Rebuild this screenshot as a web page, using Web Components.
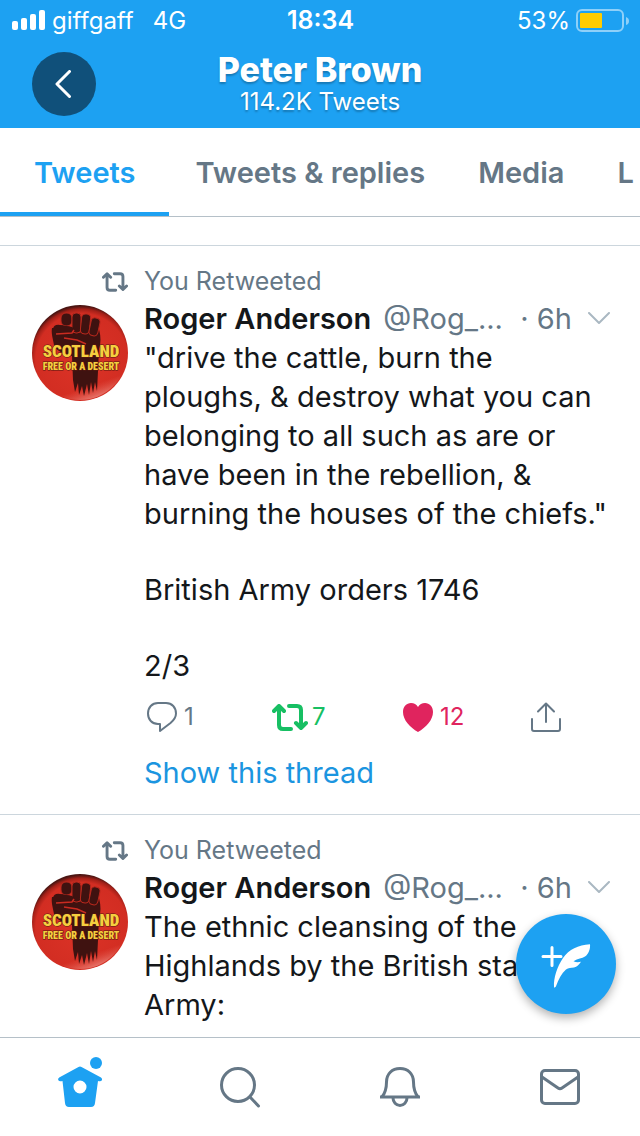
<!DOCTYPE html>
<html lang="en">
<head>
<meta charset="utf-8">
<meta name="viewport" content="width=device-width, initial-scale=1">
<title>Peter Brown</title>
<style>
  body {
    margin: 0;
    font-family: Inter, "Liberation Sans", sans-serif;
    color: #14171a;
    background: #fff;
    --blue: #1da1f2;
    --grey: #657786;
    --line: #ccd6dd;
  }
</style>
</head>
<body>
<profile-page>
  <status-bar slot="top" carrier="giffgaff" network="4G" time="18:34" battery="53"></status-bar>
  <profile-header slot="top" name="Peter Brown" count="114.2K Tweets"></profile-header>
  <profile-tabs slot="top">
    <a href="#tweets" aria-current="page">Tweets</a>
    <a href="#replies">Tweets &amp; replies</a>
    <a href="#media">Media</a>
    <a href="#likes" aria-label="Likes">L</a>
  </profile-tabs>

  <tweet-card author="Roger Anderson" handle="@Rog_..." age="6h" replies="1" retweets="7" likes="12">
    <p>"drive the cattle, burn the ploughs, &amp; destroy what you can belonging to all such as are or have been in the rebellion, &amp; burning the houses of the chiefs."</p>
    <p>British Army orders 1746</p>
    <p>2/3</p>
  </tweet-card>
  <tweet-card author="Roger Anderson" handle="@Rog_..." age="6h" replies="1" retweets="7" likes="12">
    <p>The ethnic cleansing of the Highlands by the British state Army:</p>
  </tweet-card>

  <compose-button slot="float"></compose-button>
  <bottom-nav slot="bottom"></bottom-nav>
</profile-page>

<script>
const icons = {
  back: '<svg width="18" height="28" viewBox="0 0 18 28" fill="none" stroke="currentColor" stroke-width="3" stroke-linecap="round" stroke-linejoin="round"><path d="M14.500 1.500L2 14l12.500 12.500"/></svg>',
  retweet: '<svg viewBox="0 0 36 27" fill="none" stroke="currentColor" stroke-width="4" stroke-linecap="round" stroke-linejoin="round"><path d="M2 7l5-5 5 5M7 3v18q0 4 4 4h8M17 2h8q4 0 4 4v18M24 19l5 5 5-5"/></svg>',
  reply: '<svg viewBox="0 0 30 30" fill="none" stroke="currentColor" stroke-width="2" stroke-linejoin="round"><path d="M11 1h8c6 0 10 4.500 10 10.500 0 4-2 6.500-5.500 9.500L13 29v-7h-2C5 22 1 17.500 1 11.500S5 1 11 1z"/></svg>',
  heart: '<svg viewBox="0 0 30 30" fill="currentColor"><path d="M15 30C7 25.500 0 18 0 10 0 4.500 3.500 1 8 1c3 0 5.500 1.500 7 4 1.500-2.500 4-4 7-4 4.500 0 8 3.500 8 9 0 8-7 15.500-15 20z"/></svg>',
  share: '<svg viewBox="0 0 30 30" fill="none" stroke="currentColor" stroke-width="2" stroke-linecap="round" stroke-linejoin="round"><path d="M15 20V1.500M7 9.500l8-8 8 8M1 17v10q0 2 2 2h24q2 0 2-2V17"/></svg>',
  caret: '<svg width="22" height="13" viewBox="0 0 22 13" fill="none" stroke="currentColor" stroke-width="2" stroke-linecap="round" stroke-linejoin="round"><path d="M1 1l10 10L21 1"/></svg>',
  feather: '<svg viewBox="0 0 100 100" fill="#fff"><path d="M27 42.500h18M36 33.500v18" stroke="#fff" stroke-width="3" stroke-linecap="round"/><path d="M38 73C37.500 64 41 53 47 44 53 35.500 62 31 74 30.300c.5 4-1 9.500-5 12.300-3 2-7 2-11.500 4.700 2.500 1 4.700 1 7.500.5-2 3-4 5-7 5.800-3 .6-5.500.2-8 1.900-4.500 4-7.500 10-10 16.800-.4 1-1.900 1.800-2 .7z"/></svg>',
  home: '<svg viewBox="0 0 44 44" fill="currentColor"><path fill-rule="evenodd" d="M20.500 2q1.500-1 3 0L43 12.500q1.500 1 1 2.500-.8 1.800-4 1L37 38q-.4 4-4 4H11q-3.600 0-4-4L4.500 16q-3.500.8-4.300-1-.6-1.500 1-2.500zM22 15.500a6.500 6.500 0 1 0 0 13 6.500 6.500 0 1 0 0-13z"/><circle cx="38" cy="-2" r="6"/></svg>',
  search: '<svg viewBox="0 0 44 44" fill="none" stroke="currentColor" stroke-width="3" stroke-linecap="round"><circle cx="20" cy="20" r="16.500"/><path d="M32 32l8.500 9"/></svg>',
  bell: '<svg viewBox="0 0 44 44" fill="none" stroke="currentColor" stroke-width="3" stroke-linejoin="round"><path d="M4 32c4-5 4.500-9 4.500-15C8.500 9 14 3.500 22 3.500S35.500 9 35.500 17c0 6 .5 10 4.500 15"/><path d="M2 32h40M15 33a7 7.500 0 0 0 14 0"/></svg>',
  mail: '<svg viewBox="0 0 44 44" fill="none" stroke="currentColor" stroke-width="3" stroke-linejoin="round"><rect x="3.500" y="5.500" width="37" height="33" rx="3.500"/><path d="M4 12l16 11q2 1.500 4 0l16-11"/></svg>',
  badge: `<svg viewBox="0 0 96 96" role="img" aria-label="Scotland, free or a desert">
    <defs>
      <radialGradient id="red" cx=".52" cy=".57" r=".56">
        <stop offset="0" stop-color="#dc3327"/><stop offset=".86" stop-color="#d22d22"/>
        <stop offset=".94" stop-color="#a32018"/><stop offset="1" stop-color="#4a1512"/>
      </radialGradient>
      <linearGradient id="shine" x1=".3" y1="0" x2=".65" y2="1">
        <stop offset=".85" stop-color="#e8685c" stop-opacity="0"/><stop offset="1" stop-color="#f09a90" stop-opacity=".8"/>
      </linearGradient>
    </defs>
    <circle cx="48" cy="48" r="48" fill="url(#red)"/>
    <circle cx="48" cy="48" r="47" fill="url(#shine)"/>
    <g fill="#3f1210">
      <path d="M22 23c5-4 12-3 19 0l4 5 22-4q3 12 0 20l-1 22-1 20-2-9-2 11-2-11-2 13-2-11-3 12-2-10-3 9-1-12-3 9-2-12-1-24c-8-2-16-5-18-11-1-6-3-12-2-17z"/>
      <g stroke="#b8281d" stroke-width="1">
        <rect x="29" y="8" width="11" height="13" rx="5"/>
        <rect x="40" y="8" width="9" height="20" rx="4"/>
        <rect x="49" y="9" width="9" height="20" rx="4" transform="rotate(6 54 19)"/>
        <rect x="58" y="13" width="9" height="18" rx="4" transform="rotate(12 63 22)"/>
      </g>
      <path d="M21 24q1-5 7-4l12 2q3 2 0 5l-10 1 12 4q-10 3-19 1-4-3-2-9z"/>
      <path d="M24 29l16-1 2-3M32 33l13 2 9 4" fill="none" stroke="#c92b20" stroke-width="1.500"/>
    </g>
    <g font-family="'Roboto Condensed', Roboto, sans-serif" font-weight="900" text-anchor="middle" fill="#f5cf3f" stroke="#5a170f" stroke-width="1" paint-order="stroke">
      <text x="49" y="52" font-size="17">SCOTLAND</text>
      <text x="49" y="65" font-size="10">FREE OR A DESERT</text>
    </g>
  </svg>`
};

// attaches an open root holding the styles and markup of one component
function render(el, css, html) {
  el.attachShadow({ mode: "open" }).innerHTML = `<style>${css}</style>${html}`;
}

class ProfilePage extends HTMLElement {
  connectedCallback() {
    render(this, `
      :host { display: flex; flex-direction: column; height: 100vh; }
      main { position: relative; flex: 1; min-height: 0; display: flex; flex-direction: column; }
      .feed { flex: 1; min-height: 0; overflow: hidden; padding-top: 28px; }
      slot[name="float"] { display: block; position: absolute; right: 24px; bottom: 23px; }
    `, `
      <slot name="top"></slot>
      <main>
        <div class="feed"><slot></slot></div>
        <slot name="float"></slot>
      </main>
      <slot name="bottom"></slot>
    `);
  }
}

class StatusBar extends HTMLElement {
  connectedCallback() {
    render(this, `
      :host {
        display: grid; grid-template-columns: 1fr auto 1fr; align-items: center;
        height: 40px; padding: 0 11px 0 12px;
        background: var(--blue); color: #fff; font-size: 24px;
      }
      div { display: flex; align-items: center; }
      .left { gap: 7px; }
      .left span + span { margin-left: 12px; }
      .right { justify-content: flex-end; gap: 6px; }
      time { font-size: 25px; font-weight: 600; }
      svg { flex: none; }
    `, `
      <div class="left">
        <svg width="33" height="20" viewBox="0 0 33 20" fill="#fff">
          <rect y="11" width="6" height="9" rx="2"/><rect x="9" y="8" width="6" height="12" rx="2"/>
          <rect x="18" y="4" width="6" height="16" rx="2"/><rect x="27" width="6" height="20" rx="2"/>
        </svg>
        <span>${this.getAttribute("carrier")}</span>
        <span>${this.getAttribute("network")}</span>
      </div>
      <time>${this.getAttribute("time")}</time>
      <div class="right">
        <span>${this.getAttribute("battery")}%</span>
        <svg width="53" height="23" viewBox="0 0 53 23">
          <rect x="1" y="1" width="46" height="21" rx="5" fill="none" stroke="#8ed0f9" stroke-width="2"/>
          <rect x="4" y="4" width="22" height="15" rx="1" fill="#ffcc00"/>
          <path d="M50 8q3 1 3 4t-3 4z" fill="#8ed0f9"/>
        </svg>
      </div>
    `);
  }
}

class ProfileHeader extends HTMLElement {
  connectedCallback() {
    render(this, `
      :host {
        display: grid; grid-template-columns: 64px 1fr 64px; align-items: center;
        padding: 12px 32px; background: var(--blue); color: #fff; text-align: center;
      }
      button {
        display: grid; place-items: center; width: 64px; height: 64px; padding: 0;
        border: 0; border-radius: 50%; background: #10507a; color: #fff;
      }
      h1, p { margin: 0; text-shadow: 0 2px 2px rgba(0, 0, 0, .25); }
      h1 { font-size: 34px; line-height: 36px; font-weight: 800; }
      p { font-size: 24px; line-height: 28px; }
    `, `
      <button type="button" aria-label="Back">${icons.back}</button>
      <div>
        <h1>${this.getAttribute("name")}</h1>
        <p>${this.getAttribute("count")}</p>
      </div>
    `);
  }
}

class ProfileTabs extends HTMLElement {
  connectedCallback() {
    render(this, `
      :host { display: block; overflow: hidden; border-bottom: 1px solid #b5c0c8; }
      nav { display: flex; }
      ::slotted(a) {
        flex: none; box-sizing: border-box; height: 88px; padding: 0 27px 0 26px;
        line-height: 90px; font-size: 29px; font-weight: 600;
        color: var(--grey); text-decoration: none; white-space: nowrap;
      }
      ::slotted(a:first-child) { padding: 0 34px; }
      ::slotted(a[aria-current]) { color: var(--blue); border-bottom: 4px solid var(--blue); }
    `, `<nav><slot></slot></nav>`);
  }
}

class TweetCard extends HTMLElement {
  connectedCallback() {
    render(this, `
      :host {
        display: grid; grid-template-columns: 96px minmax(0, 1fr); column-gap: 16px;
        padding: 18px 30px 21px 32px; border-top: 1px solid var(--line);
      }
      button { display: flex; align-items: center; padding: 0; border: 0; background: none; font: inherit; color: inherit; }
      .mark { display: flex; justify-content: flex-end; align-items: center; color: var(--grey); }
      .mark svg { width: 26px; height: 20px; }
      .context { font-size: 25px; line-height: 35px; color: var(--grey); }
      .avatar { height: 96px; margin-top: 6px; }
      .avatar svg { display: block; width: 96px; height: 96px; }
      header { display: flex; align-items: center; font-size: 29px; line-height: 39px; color: var(--grey); }
      header strong { font-weight: 600; color: #14171a; margin-right: 12px; }
      header time { margin-left: auto; }
      header button { margin-left: 16px; color: #aab8c2; }
      .text { display: grid; gap: 37px; font-size: 29px; line-height: 39px; }
      ::slotted(p) { margin: 0; }
      .actions { display: flex; margin: 16px 49px 0 3px; font-size: 24px; line-height: 32px; color: var(--grey); }
      .actions button { flex: 1; gap: 7px; }
      .actions button:last-child { flex: none; }
      .actions svg { width: 30px; height: 30px; }
      .actions .retweet svg { width: 36px; height: 27px; margin: 0 -3px; }
      .actions .retweet { color: #17bf63; }
      .actions .like { color: #e0245e; }
      .thread { display: block; margin-top: 20px; font-size: 29px; line-height: 40px; color: #1b95e0; text-decoration: none; }
    `, `
      <div class="mark">${icons.retweet}</div>
      <div class="context">You Retweeted</div>
      <div class="avatar">${icons.badge}</div>
      <article>
        <header>
          <strong>${this.getAttribute("author")}</strong>
          <span>${this.getAttribute("handle")}</span>
          <time>· ${this.getAttribute("age")}</time>
          <button type="button" aria-label="More">${icons.caret}</button>
        </header>
        <div class="text"><slot></slot></div>
        <div class="actions">
          <button type="button" aria-label="Reply">${icons.reply}<span>${this.getAttribute("replies")}</span></button>
          <button type="button" class="retweet" aria-label="Retweet">${icons.retweet}<span>${this.getAttribute("retweets")}</span></button>
          <button type="button" class="like" aria-label="Like">${icons.heart}<span>${this.getAttribute("likes")}</span></button>
          <button type="button" aria-label="Share">${icons.share}</button>
        </div>
        <a class="thread" href="#thread">Show this thread</a>
      </article>
    `);
  }
}

class ComposeButton extends HTMLElement {
  connectedCallback() {
    render(this, `
      :host { display: block; }
      button {
        display: block; width: 100px; height: 100px; padding: 0; border: 0; border-radius: 50%;
        background: var(--blue); box-shadow: 0 4px 10px rgba(0, 0, 0, .3);
      }
      svg { display: block; }
    `, `<button type="button" aria-label="New Tweet">${icons.feather}</button>`);
  }
}

class BottomNav extends HTMLElement {
  connectedCallback() {
    render(this, `
      :host { display: block; border-top: 1px solid #b5c0c8; background: #fff; }
      nav { display: grid; grid-template-columns: repeat(4, 1fr); }
      a { display: grid; place-items: center; height: 98px; color: var(--grey); }
      a[aria-current] { color: var(--blue); }
      svg { width: 44px; height: 44px; overflow: visible; }
    `, `
      <nav>
        <a href="#home" aria-label="Home" aria-current="page">${icons.home}</a>
        <a href="#search" aria-label="Search">${icons.search}</a>
        <a href="#notifications" aria-label="Notifications">${icons.bell}</a>
        <a href="#messages" aria-label="Messages">${icons.mail}</a>
      </nav>
    `);
  }
}

customElements.define("profile-page", ProfilePage);
customElements.define("status-bar", StatusBar);
customElements.define("profile-header", ProfileHeader);
customElements.define("profile-tabs", ProfileTabs);
customElements.define("tweet-card", TweetCard);
customElements.define("compose-button", ComposeButton);
customElements.define("bottom-nav", BottomNav);
</script>
</body>
</html>
